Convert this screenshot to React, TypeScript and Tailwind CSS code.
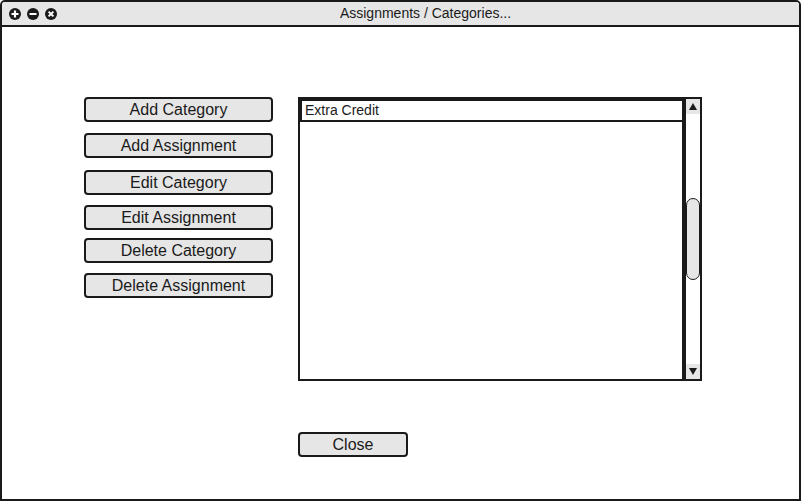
import React from "react";

const FONT = { fontFamily: '"Liberation Sans", Arial, sans-serif' };

// left column buttons, with the top gap each one has
const BUTTONS: Array<{ label: string; mt: string }> = [
  { label: "Add Category", mt: "mt-0" },
  { label: "Add Assignment", mt: "mt-[11px]" },
  { label: "Edit Category", mt: "mt-[12px]" },
  { label: "Edit Assignment", mt: "mt-[10px]" },
  { label: "Delete Category", mt: "mt-[8px]" },
  { label: "Delete Assignment", mt: "mt-[10px]" },
];

function WinIcon({ kind }: { kind: "plus" | "minus" | "close" }) {
  return (
    <svg width="12" height="12" viewBox="0 0 12 12" className="shrink-0">
      <circle cx="6" cy="6" r="6" fill="#1a1a1a" />
      {kind === "plus" && (
        <path d="M6 2.5v7M2.5 6h7" stroke="#fff" strokeWidth="2.2" />
      )}
      {kind === "minus" && <path d="M2.5 6h7" stroke="#fff" strokeWidth="2.2" />}
      {kind === "close" && (
        <path d="M3.6 3.6l4.8 4.8M8.4 3.6l-4.8 4.8" stroke="#fff" strokeWidth="2" />
      )}
    </svg>
  );
}

function Btn({ label, className }: { label: string; className?: string }) {
  return (
    <button
      className={`flex h-[25px] items-center justify-center rounded-[4px] border-2 border-[#1a1a1a] bg-[#e6e6e6] text-[16px] leading-none text-[#1a1a1a] ${className ?? ""}`}
    >
      {label}
    </button>
  );
}

export default function App() {
  return (
    <div
      style={FONT}
      className="flex h-[501px] w-[801px] flex-col overflow-hidden rounded-t-[5px] border-2 border-[#1a1a1a] bg-white"
    >
      {/* title bar */}
      <div className="flex h-[25px] shrink-0 items-center border-b-2 border-[#1a1a1a] bg-[#e6e6e6]">
        <div className="flex w-[60px] shrink-0 items-center gap-[6px] pl-[7px]">
          <WinIcon kind="plus" />
          <WinIcon kind="minus" />
          <WinIcon kind="close" />
        </div>
        <div className="mr-[10px] flex-1 text-center text-[14px] text-[#1a1a1a]">
          Assignments / Categories...
        </div>
      </div>

      {/* body */}
      <div className="flex pl-[82px] pt-[70px]">
        <div className="flex w-[189px] flex-col">
          {BUTTONS.map((b) => (
            <Btn key={b.label} label={b.label} className={b.mt} />
          ))}
        </div>

        <div className="ml-[25px] flex flex-col">
          {/* list box */}
          <div className="flex h-[284px] w-[404px] border-2 border-[#1a1a1a]">
            <div className="flex-1">
              <div className="flex h-[23px] items-center border-y-2 border-l-2 border-[#1a1a1a] pl-[3px] text-[14px] text-[#1a1a1a]">
                Extra Credit
              </div>
            </div>
            {/* scrollbar */}
            <div className="flex w-[18px] flex-col border-l-4 border-[#1a1a1a]">
              <div className="flex h-[15px] items-center justify-center bg-[#e6e6e6]">
                <svg width="8" height="7" viewBox="0 0 8 7">
                  <path d="M4 0L8 7H0Z" fill="#1a1a1a" />
                </svg>
              </div>
              <div className="flex-1">
                <div className="mt-[84px] h-[82px] rounded-[7px] border border-[#1a1a1a] bg-[#e6e6e6]" />
              </div>
              <div className="flex h-[15px] items-center justify-center bg-[#e6e6e6]">
                <svg width="8" height="7" viewBox="0 0 8 7">
                  <path d="M0 0H8L4 7Z" fill="#1a1a1a" />
                </svg>
              </div>
            </div>
          </div>

          <Btn label="Close" className="mt-[51px] w-[110px]" />
        </div>
      </div>
    </div>
  );
}
